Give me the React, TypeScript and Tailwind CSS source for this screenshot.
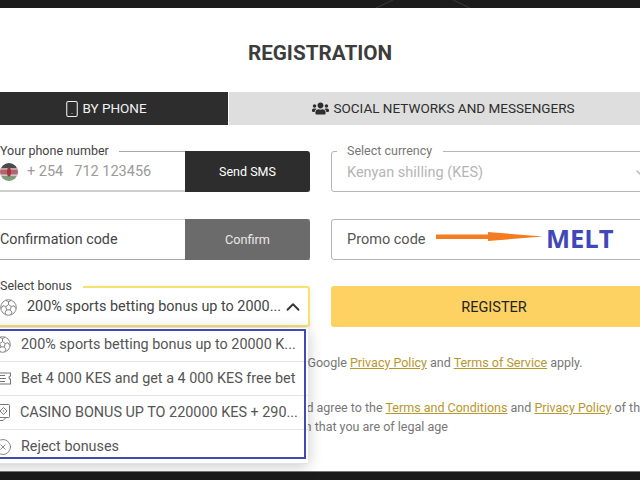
import { ChevronDown, ChevronUp, CircleX, Smartphone } from 'lucide-react';
import { FaUsers } from 'react-icons/fa';

const KenyaFlag = () => (
  <svg width="18" height="18" viewBox="0 0 18 18" className="shrink-0">
    <defs>
      <clipPath id="flag-clip">
        <circle cx="9" cy="9" r="9" />
      </clipPath>
    </defs>
    <g clipPath="url(#flag-clip)">
      <rect width="18" height="6" fill="#4a4a4a" />
      <rect y="6" width="18" height="6" fill="#b5636d" />
      <rect y="12" width="18" height="6" fill="#7f9c7e" />
      <rect y="5.4" width="18" height="1" fill="#eeeeee" />
      <rect y="11.6" width="18" height="1" fill="#eeeeee" />
      <ellipse cx="9" cy="9" rx="2" ry="4.6" fill="#a8323f" />
    </g>
  </svg>
);

const BallIcon = () => (
  <svg width="17" height="17" viewBox="0 0 17 17" fill="none" stroke="#777" strokeWidth="0.9" className="shrink-0">
    <circle cx="8.500" cy="8.500" r="7.800" />
    <path d="M8.500 5.600L11.300 7.600L10.200 10.900H6.800L5.700 7.600z" />
    <path d="M8.500 5.600V2.700M11.300 7.600L14 6.700M10.200 10.900L11.900 13.200M6.800 10.900L5.100 13.200M5.700 7.600L3 6.700" />
    <path d="M5.800 1.300L8.500 2.700L11.200 1.300M14 6.700L15.900 9.500M11.900 13.200L10.800 15.800M5.100 13.200L6.200 15.800M3 6.700L1.100 9.500" />
  </svg>
);

const TicketIcon = () => (
  <svg width="17" height="13" viewBox="0 0 17 13" fill="none" stroke="#777" strokeWidth="1.1" className="shrink-0">
    <path d="M0 1h16.500v3a1.500 1.500 0 0 0 0 3v5H0z" />
    <path d="M0 6.500h12M2 3.500h9M2 9.500h9" />
  </svg>
);

const CasinoIcon = () => (
  <svg width="16" height="17" viewBox="0 0 16 17" fill="none" stroke="#777" strokeWidth="1" className="shrink-0">
    <rect x="3.500" y="0.500" width="12" height="13" rx="1" />
    <path d="M3.500 4.500L0.500 5.500V15L3 16.500H9L12 13.500" />
    <path d="M9.500 3.500L13 7L9.500 10.500L6 7z" />
    <circle cx="9.500" cy="7" r="0.700" fill="#777" stroke="none" />
    <circle cx="5" cy="11.500" r="0.700" fill="#777" stroke="none" />
  </svg>
);

const menuItems = [
  { icon: <BallIcon />, label: '200% sports betting bonus up to 20000 K...', cls: 'gap-[10px]' },
  { icon: <TicketIcon />, label: 'Bet 4 000 KES and get a 4 000 KES free bet', cls: 'gap-[10px]' },
  { icon: <CasinoIcon />, label: 'CASINO BONUS UP TO 220000 KES + 290...', cls: 'gap-[10px]' },
  { icon: <CircleX size={18} strokeWidth={1} color="#666" className="shrink-0" />, label: 'Reject bonuses', cls: 'gap-[9px]' },
];

export default function App() {
  return (
    <div className="relative flex h-[480px] w-[640px] flex-col overflow-hidden bg-white font-['Roboto',sans-serif]">
      {/* Top bar */}
      <div className="h-[8px] shrink-0 bg-[#1c1c1c]">
        <svg width="640" height="8" className="block">
          <path d="M376 8L393 0M453 0L470 8" stroke="#3a3a3a" strokeWidth="1" />
        </svg>
      </div>

      <div className="flex-1">
        <h1 className="mt-[33px] text-center text-[20.7px] leading-[24px] font-bold text-[#3c3c3c]">REGISTRATION</h1>

        {/* Tabs */}
        <div className="mt-[27px] flex h-[33px] text-[13.5px] leading-[33px]">
          <div className="flex w-[229px] items-center justify-center gap-[1px] border-r border-white bg-[#2d2d2d] pr-[18px] text-[#f0f0f0]">
            <Smartphone size={18} strokeWidth={1.4} />
            <span>BY PHONE</span>
          </div>
          <div className="flex flex-1 items-center justify-center gap-[5px] bg-[#dedede] pl-[17px] text-[#2d2d2d]">
            <FaUsers size={17} />
            <span>SOCIAL NETWORKS AND MESSENGERS</span>
          </div>
        </div>

        {/* Form */}
        <div className="relative mt-[26px] ml-[-16px] grid w-[673px] grid-cols-[326px_326px] gap-x-[21px] gap-y-[27px]">
          {/* Phone */}
          <div className="relative flex h-[41px] border-b-2 border-[#cfcfcf]">
            <div className="flex flex-1 items-center border-t border-[#a8a8a8] pt-[2px] pl-[16px] text-[14.5px] text-[#9a9a9a]">
              <KenyaFlag />
              <span className="ml-[9px]">+ 254</span>
              <span className="ml-[11px]">712 123456</span>
            </div>
            <button className="mb-[-2px] h-[41px] w-[125px] rounded-r-[3px] bg-[#2d2d2d] pt-[1px] text-[12.5px] text-white">Send SMS</button>
            <span className="absolute top-[-8px] left-[16px] bg-white pr-[10px] text-[12.5px] leading-[15px] text-[#444]">Your phone number</span>
          </div>

          {/* Currency */}
          <div className="relative flex h-[41px] items-center justify-between rounded-[3px] border border-[#b5b5b5] pt-[2px] pr-[7px] pl-[15px] text-[14.5px] text-[#b5b5b5]">
            <span>Kenyan shilling (KES)</span>
            <ChevronDown size={16} />
            <span className="absolute top-[-9px] left-[5px] bg-white pr-[11px] pl-[10px] text-[12.5px] leading-[15px] text-[#777]">Select currency</span>
          </div>

          {/* Confirmation */}
          <div className="flex h-[41px] border-y border-t-[#cfcfcf] border-b-[#a8a8a8]">
            <div className="flex flex-1 items-center pl-[16px] text-[14.3px] text-[#444]">Confirmation code</div>
            <button className="mt-[-1px] h-[41px] w-[125px] rounded-r-[3px] bg-[#6b6b6b] text-[12.7px] text-[#e8e8e8]">Confirm</button>
          </div>

          {/* Promo */}
          <div className="relative flex h-[41px] items-center rounded-[3px] border border-[#b5b5b5] pl-[15px] text-[14.5px] text-[#555]">
            <span>Promo code</span>
            <svg width="108" height="12" viewBox="0 0 108 12" className="absolute top-[11px] left-[104px]">
              <path d="M0 3.500H52V1L107 5.500L52 10V8H0z" fill="#f47b20" />
            </svg>
            <span className="absolute top-[2px] left-[214px] font-['Open_Sans',sans-serif] text-[25.5px] leading-[32px] font-bold text-[#3f48b8]">MELT</span>
          </div>

          {/* Bonus */}
          <div className="relative mt-[-1px] flex h-[41px] items-center rounded-[3px] border-2 border-[#f7e26b] pt-[1px] pr-[4px] pl-[14px] text-[14.4px] text-[#444] shadow-[0_2px_6px_rgba(0,0,0,0.08)]">
            <BallIcon />
            <span className="ml-[10px] flex-1 whitespace-nowrap">200% sports betting bonus up to 2000...</span>
            <ChevronUp size={22} strokeWidth={2} color="#333" className="shrink-0" />
            <span className="absolute top-[-10px] left-[-2px] bg-white pr-[11px] pl-[16px] text-[12.5px] leading-[15px] text-[#444]">Select bonus</span>

            {/* Dropdown */}
            <div className="absolute top-[40px] left-[-2px] z-10 h-[135px] w-[324px] bg-white pl-[10px] shadow-[0_3px_14px_rgba(0,0,0,0.22)]">
              {menuItems.map((item) => (
                <div key={item.label} className={`flex h-[34px] items-center whitespace-nowrap border-b border-[#e4e4e4] text-[14.4px] text-[#555] last:border-b-0 ${item.cls}`}>
                  {item.icon}
                  <span>{item.label}</span>
                </div>
              ))}
              <div className="absolute top-[1px] left-[12px] h-[130px] w-[310px] border-2 border-[#4149b5]" />
            </div>
          </div>

          {/* Register */}
          <button className="mt-[-1px] h-[41px] rounded-[3px] bg-[#fdd263] pt-[2px] text-[14.5px] text-[#222]">REGISTER</button>
        </div>

        {/* Notes */}
        <div className="mt-[26px] whitespace-nowrap text-[12.5px] leading-[19px] text-[#777]">
          <p className="ml-[57px]">
            This site is protected by reCAPTCHA and the Google{' '}
            <a className="text-[#b8962e] underline">Privacy Policy</a> and{' '}
            <a className="text-[#b8962e] underline">Terms of Service</a> apply.
          </p>
          <p className="mt-[26px] ml-[-6px]">
            By clicking this button you confirm that you have read and agree to the{' '}
            <a className="text-[#b8962e] underline">Terms and Conditions</a> and{' '}
            <a className="text-[#b8962e] underline">Privacy Policy</a> of the company
          </p>
          <p className="ml-[245px]">and confirm that you are of legal age</p>
        </div>
      </div>

      {/* Bottom bar */}
      <div className="h-[9px] shrink-0 border-t border-[#777] bg-[#1a1a1a]" />
    </div>
  );
}
